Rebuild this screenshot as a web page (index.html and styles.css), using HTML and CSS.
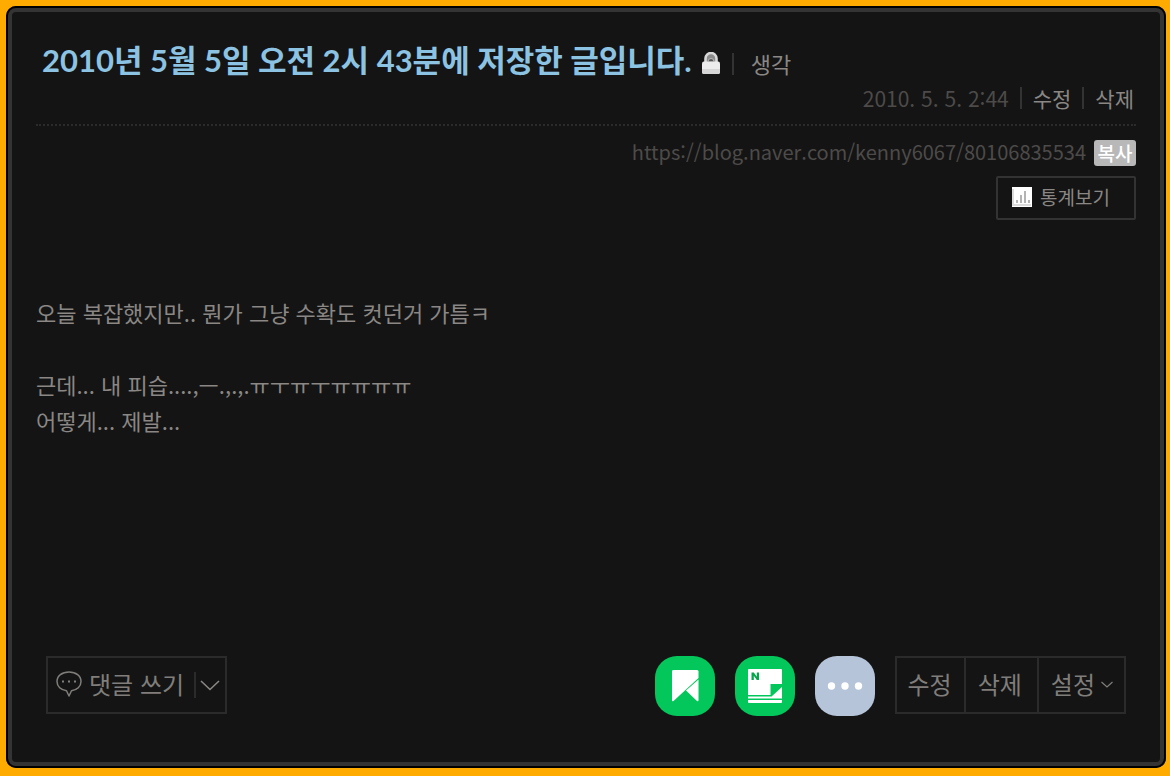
FILE: index.html
```html
<!DOCTYPE html>
<html lang="ko">
<head>
<meta charset="utf-8">
<meta name="viewport" content="width=device-width, initial-scale=1">
<title>2010년 5월 5일 오전 2시 43분에 저장한 글입니다.</title>
<link rel="stylesheet" href="styles.css">
</head>
<body>
<article class="post">
  <header class="post-head">
    <div class="title-row">
      <h1 class="title">2010년 5월 5일 오전 2시 43분에 저장한 글입니다.</h1>
      <svg class="lock" viewBox="0 0 18 22" role="img" aria-label="비공개">
        <path d="M3.500 11V6.500a5.500 5.500 0 0 1 11 0V11" fill="#8a8a8a" stroke="#d8d8d8" stroke-width="2.600"/>
        <path d="M6 9.500a3 3 0 0 1 6 0" fill="#555" stroke="#bbb" stroke-width="1"/>
        <rect x="0" y="9.500" width="18" height="12.500" rx="2" fill="#ececec"/>
        <path d="M0 17h18v3a2 2 0 0 1-2 2H2a2 2 0 0 1-2-2z" fill="#d6d6d6"/>
      </svg>
      <span class="divider"></span>
      <a class="category" href="#">생각</a>
    </div>
    <div class="meta-row">
      <time class="date" datetime="2010-05-05T02:44">2010. 5. 5. 2:44</time>
      <span class="divider"></span>
      <a class="meta-link" href="#">수정</a>
      <span class="divider"></span>
      <a class="meta-link" href="#">삭제</a>
    </div>
  </header>

  <div class="url-row">
    <a class="url" href="#">https://blog.naver.com/kenny6067/80106835534</a>
    <button class="copy" type="button">복사</button>
  </div>
  <button class="stats" type="button">
    <svg class="stats-icon" viewBox="0 0 20 20" aria-hidden="true">
      <rect width="20" height="20" fill="#fff"/>
      <path d="M1 2v16h18" fill="none" stroke="#dcdcdc" stroke-width="2"/>
      <path d="M5 13v3M9 8v8M13 4v12M17 13v3" stroke="#b4b4b4" stroke-width="2"/>
    </svg>
    통계보기
  </button>

  <div class="body">
    <p>오늘 복잡했지만.. 뭔가 그냥 수확도 컷던거 가틈ㅋ</p>
    <p><br></p>
    <p>근데... 내 피습....,ㅡ.,.,.ㅠㅜㅠㅜㅠㅠㅠㅠ</p>
    <p>어떻게... 제발...</p>
  </div>

  <footer class="post-foot">
    <div class="comment">
      <button class="comment-write" type="button">
        <svg class="bubble" viewBox="0 0 26 26" aria-hidden="true">
          <path d="M13 1C6 1 1 5 1 10.500c0 5 4 8.500 9.500 9.200L13 25l2.500-5.300C21 19 25 15.500 25 10.500 25 5 20 1 13 1z" fill="none" stroke="#807e7b" stroke-width="1.500" stroke-linejoin="round"/>
          <path d="M6 9.500h2v2H6zM12 9.500h2v2h-2zM18 9.500h2v2h-2z" fill="#807e7b"/>
        </svg>
        댓글 쓰기
      </button>
      <span class="divider comment-divider"></span>
      <button class="comment-toggle" type="button" aria-label="댓글 펼치기">
        <svg class="chevron" viewBox="0 0 20 11" aria-hidden="true"><path d="M1 1l9 8.500L19 1" fill="none" stroke="#8a8784" stroke-width="1.600"/></svg>
      </button>
    </div>

    <div class="share">
      <button class="tile green" type="button" aria-label="킵">
        <svg viewBox="0 0 60 60" aria-hidden="true">
          <path d="M18 14h24q1.500 0 1.500 1.500V22L18.500 45Q17 45.800 17 44.300V15.500Q17 14 18 14z" fill="#fff"/>
          <path d="M43.500 23.500V44q0 1.800-1.500 1L31 34.500z" fill="#fff"/>
        </svg>
      </button>
      <button class="tile green" type="button" aria-label="메모">
        <svg viewBox="0 0 60 60" aria-hidden="true">
          <path d="M14 13h32q1 0 1 1v14H35.500v11H13V14q0-1 1-1z" fill="#fff"/>
          <path d="M47 31v11.500H13V40.500h23.500z" fill="#fff"/>
          <path d="M13 44h34v2q0 1-1 1H14q-1 0-1-1z" fill="#fff"/>
          <path d="M16.500 24v-7.500h2.300l3 4.200v-4.200H24V24h-2.200l-3-4.200V24z" fill="#03a84b"/>
        </svg>
      </button>
      <button class="tile gray" type="button" aria-label="더보기">
        <svg viewBox="0 0 60 60" aria-hidden="true">
          <g fill="#fff"><circle cx="16.500" cy="30" r="3.700"/><circle cx="30" cy="30" r="3.700"/><circle cx="43.500" cy="30" r="3.700"/></g>
        </svg>
      </button>
    </div>

    <div class="actions">
      <button class="action action-edit" type="button">수정</button>
      <button class="action action-delete" type="button">삭제</button>
      <button class="action action-settings" type="button">설정
        <svg class="chevron-small" viewBox="0 0 12 7" aria-hidden="true"><path d="M0.500 1L6 6l5.500-5" fill="none" stroke="#807e7b" stroke-width="1.200"/></svg>
      </button>
    </div>
  </footer>
</article>
</body>
</html>
```
FILE: styles.css
```css
* {
  box-sizing: border-box;
}

body {
  margin: 0;
  min-height: 100vh;
  display: flex;
  padding: 6px 4px 8px 6px;
  background: #ffab00;
  color: #8a8784;
  font-family: "Noto Sans CJK KR", sans-serif;
}

button {
  margin: 0;
  padding: 0;
  border: 0;
  background: none;
  color: inherit;
  font: inherit;
  cursor: pointer;
}

a {
  color: inherit;
  text-decoration: none;
}

svg {
  display: block;
  flex: none;
}

.post {
  flex: 1;
  min-width: 0;
  display: flex;
  flex-direction: column;
  padding: 24px 24px 46px;
  border: 6px solid #343434;
  border-radius: 10px;
  outline: 2px solid #000;
  outline-offset: -2px;
  background: #141414;
}

.post-head {
  border-bottom: 2px dotted #2b2b2b;
  padding-bottom: 12px;
}

.title-row {
  display: flex;
  align-items: center;
  padding-left: 6px;
  height: 48px;
}

.title {
  margin: 0;
  color: #8cc3e2;
  font-family: Lato, "Noto Sans CJK KR", sans-serif;
  font-size: 31px;
  line-height: 48px;
  font-weight: 700;
}

.lock {
  width: 18px;
  height: 22px;
  margin: 6px 12px 0 10px;
}

.divider {
  flex: none;
  width: 2px;
  height: 22px;
  background: #333;
}

.title-row .divider {
  margin-top: 8px;
}

.category {
  margin: 6px 0 0 17px;
  font-size: 22px;
  line-height: 30px;
}

.meta-row {
  display: flex;
  align-items: center;
  justify-content: flex-end;
  height: 28px;
  gap: 11px;
  padding-right: 2px;
  font-size: 21px;
  line-height: 28px;
}

.date,
.url {
  color: #4d4b49;
}

.url-row {
  display: flex;
  justify-content: flex-end;
  align-items: center;
  gap: 8px;
  margin-top: 14px;
  font-size: 20px;
  line-height: 24px;
}

.url {
  padding-bottom: 2px;
}

.copy {
  width: 42px;
  height: 26px;
  border-radius: 3px;
  background: #b8b8b8;
  color: #fff;
  font-size: 19px;
  line-height: 26px;
  font-weight: 500;
}

.stats {
  align-self: flex-end;
  display: flex;
  align-items: center;
  gap: 8px;
  width: 140px;
  height: 44px;
  margin-top: 10px;
  padding: 0 14px 2px;
  border: 2px solid #333;
  border-radius: 2px;
  font-size: 19px;
  line-height: 28px;
}

.stats-icon {
  width: 20px;
  height: 20px;
}

.body {
  margin: 74px 0 40px;
  font-size: 22px;
  line-height: 36px;
}

.body p {
  margin: 0;
}

.post-foot {
  display: flex;
  align-items: flex-start;
  gap: 20px;
  margin-top: auto;
  padding: 0 10px;
  color: #807e7b;
  font-size: 24px;
  line-height: 36px;
}

.comment {
  display: flex;
  align-items: center;
  height: 58px;
  margin-right: auto;
  border: 2px solid #2b2b2b;
}

.comment-write {
  display: flex;
  align-items: center;
  gap: 7px;
  height: 100%;
  padding: 0 10px 2px 8px;
}

.bubble {
  width: 26px;
  height: 26px;
}

.comment-divider {
  height: 26px;
  background: #2b2b2b;
}

.comment-toggle {
  height: 100%;
  padding: 0 5px 0 4px;
}

.chevron {
  width: 20px;
  height: 11px;
}

.share {
  display: flex;
  gap: 20px;
}

.tile {
  width: 60px;
  height: 60px;
  border-radius: 22px;
}

.green {
  background: #03c75a;
}

.gray {
  background: #b5c4d9;
}

.actions {
  display: flex;
  height: 58px;
  border: 2px solid #2b2b2b;
}

.action {
  display: flex;
  align-items: center;
  gap: 6px;
  padding: 0 12px 2px;
}

.action + .action {
  border-left: 2px solid #2b2b2b;
}

.action-edit {
  padding-left: 10px;
}

.action-delete {
  padding-right: 15px;
}

.action-settings {
  padding-right: 11px;
}

.chevron-small {
  width: 12px;
  height: 7px;
}
```
